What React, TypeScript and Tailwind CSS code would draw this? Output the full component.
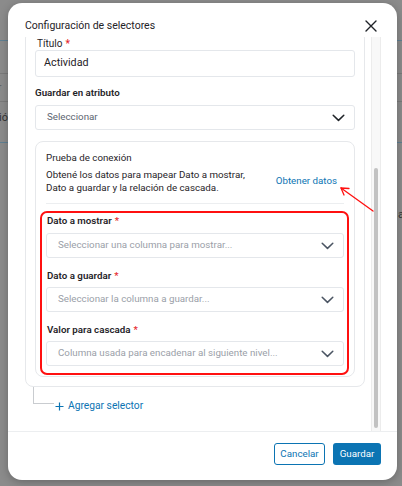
import React from "react";

const Chevron = ({ dark = false }: { dark?: boolean }) => (
  <svg width="13" height="8" viewBox="0 0 13 8" fill="none">
    <path d="M1.2 1.2 L6.5 6.4 L11.8 1.2" stroke={dark ? "#1f2328" : "#4b5563"} strokeWidth="1.5" strokeLinecap="round" strokeLinejoin="round" />
  </svg>
);

const Req = () => <span className="text-[#e5262b] ml-[3px] font-medium">*</span>;

const SelectBox = ({ text }: { text: string }) => (
  <div className="h-[25px] rounded-[3px] border border-[#e4e7eb] bg-white flex items-center justify-between pl-[11px] pr-[9px]">
    <span className="text-[9.75px] text-[#9aa0a8]">{text}</span>
    <Chevron />
  </div>
);

const Label = ({ children, mt }: { children: React.ReactNode; mt: string }) => (
  <div className={`${mt} text-[9.75px] font-semibold text-[#1f2328] leading-[12px] pl-[1px]`}>{children}</div>
);

export default function App() {
  return (
    <div
      className="relative w-[402px] h-[486px] overflow-hidden bg-[#8b8b8b]"
      style={{ fontFamily: "Roboto, 'Liberation Sans', sans-serif" }}
    >
      {/* background page (dimmed) */}
      <div className="flex flex-col">
        <div className="h-[40px]" />
        <div className="h-[1px] bg-[#5f7f92]" />
        <div className="h-[32px]" />
        <div className="h-[1px] bg-[#7a7a7a]" />
        <div className="h-[27px] flex items-center justify-between text-[10px] text-[#5c5c5c]">
          <span className="-ml-[2px]">r</span>
        </div>
        <div className="h-[1px] bg-[#7a7a7a]" />
        <div className="h-[32px] flex items-center text-[11px] text-[#333]">
          <span className="-ml-[1px]">ió</span>
        </div>
        <div className="h-[8px]" />
        <div className="h-[1px] bg-[#5f7f92]" />
        <div className="h-[64px]" />
        <div className="h-[14px] flex justify-end text-[11px] text-[#333]">
          <span className="mr-[-2px]">a</span>
        </div>
      </div>

      {/* modal */}
      <div className="absolute left-[8px] top-[3px] w-[389px] h-[477px] rounded-[14px] bg-white shadow-[0_2px_8px_rgba(0,0,0,0.25)] flex flex-col">
        <div className="h-[34px] flex items-center justify-between pl-[17px] pr-[20px] pt-[12px]">
          <span className="text-[10.5px] leading-[14px] text-[#1f2328]">Configuración de selectores</span>
          <svg width="12" height="12" viewBox="0 0 12 12">
            <path d="M1 1 L11 11 M11 1 L1 11" stroke="#1f2328" strokeWidth="1.4" strokeLinecap="round" />
          </svg>
        </div>

        <div className="h-[395px] flex pl-[17px] pr-[16px] border-b border-[#eceef0]">
          <div className="w-[341px] overflow-hidden">
            <div className="-mt-[7px] border border-[#e6e8eb] rounded-[8px] px-[9px] pt-[7px] pb-[9px]">
              <div className="text-[10px] text-[#1f2328] leading-[12px] pl-[2px]">
                Título<Req />
              </div>
              <div className="h-[27px] rounded-[3px] border border-[#e4e7eb] flex items-center pl-[8px] text-[10.75px] text-[#1f2328]">
                Actividad
              </div>
              <div className="mt-[10px] text-[9.75px] font-semibold text-[#1f2328] leading-[12px]">
                Guardar en atributo
              </div>
              <div className="mt-[6px] h-[25px] rounded-[3px] border border-[#e4e7eb] flex items-center justify-between pl-[11px] pr-[9px]">
                <span className="text-[9.75px] text-[#5b6470]">Seleccionar</span>
                <Chevron dark />
              </div>

              <div className="mt-[11px] border border-[#e6e8eb] rounded-[8px] pt-[10px] pb-[1px]">
                <div className="ml-[10px] mr-[10px]">
                  <div className="text-[9.75px] text-[#1f2328] leading-[12px]">Prueba de conexión</div>
                  <div className="flex items-center justify-between mt-[4px]">
                    <div className="text-[9.75px] text-[#1f2328] leading-[13px]">
                      Obtené los datos para mapear Dato a mostrar,
                      <br />
                      Dato a guardar y la relación de cascada.
                    </div>
                    <span className="text-[9.75px] text-[#0b74b3] mr-[7px] mt-[1px]">Obtener datos</span>
                  </div>
                  <div className="h-[1px] bg-[#eceef0] mt-[9px]" />
                </div>
                <div className="mt-[7px] ml-[4px] mr-[5px] border-2 border-[#ff1010] rounded-[7px] pl-[4px] pr-[3px] pt-[2px] pb-[7px]">
                  <Label mt="mt-0">
                    Dato a mostrar<Req />
                  </Label>
                  <div className="mt-[6px]">
                    <SelectBox text="Seleccionar una columna para mostrar..." />
                  </div>
                  <Label mt="mt-[12px]">
                    Dato a guardar<Req />
                  </Label>
                  <div className="mt-[5px]">
                    <SelectBox text="Seleccionar la columna a guardar..." />
                  </div>
                  <Label mt="mt-[12px]">
                    Valor para cascada<Req />
                  </Label>
                  <div className="mt-[5px]">
                    <SelectBox text="Columna usada para encadenar al siguiente nivel..." />
                  </div>
                </div>
              </div>
            </div>

            <div className="flex items-start pl-[8px]">
              <div className="w-[21px] h-[17px] border-l border-b border-[#c9ccd0]" />
              <div className="flex items-center mt-[13px] ml-[1px] text-[10.25px] leading-[12px] text-[#0b74b3]">
                <svg width="9" height="9" viewBox="0 0 9 9" className="mr-[4px]">
                  <path d="M4.5 0.5 V8.5 M0.5 4.5 H8.5" stroke="#0b74b3" strokeWidth="1.2" />
                </svg>
                Agregar selector
              </div>
            </div>
          </div>

          <div className="w-[10px] ml-[6px] bg-[#f8f8f8] border-l border-r border-[#ececec] flex flex-col items-center">
            <div className="h-[131px]" />
            <div className="w-[4px] h-[260px] rounded-full bg-[#c2c2c2]" />
          </div>
        </div>

        <div className="flex-1 flex items-start justify-end gap-[8px] pr-[16px] pt-[11px]">
          <button className="h-[22px] w-[51px] rounded-[3px] border border-[#0b74b3] text-[9.75px] text-[#0b74b3] bg-white">
            Cancelar
          </button>
          <button className="h-[22px] w-[48px] rounded-[3px] bg-[#0b74b3] text-[9.75px] text-white">
            Guardar
          </button>
        </div>
      </div>

      {/* red annotation arrow */}
      <svg className="absolute left-0 top-0" width="402" height="486" viewBox="0 0 402 486" fill="none">
        <path d="M373 211 L341 188" stroke="#ff1010" strokeWidth="1.3" strokeLinecap="round" />
        <path d="M341 188 L349 188.5 M341 188 L344 195" stroke="#ff1010" strokeWidth="1.3" strokeLinecap="round" />
      </svg>
    </div>
  );
}
